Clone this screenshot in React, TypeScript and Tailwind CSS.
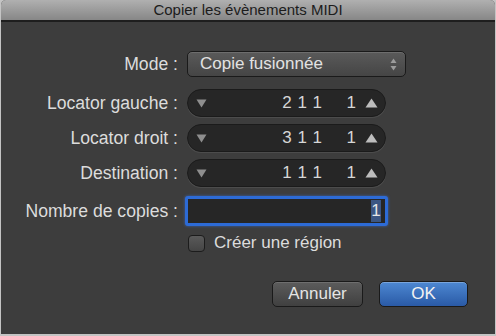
import React from "react";

const font = { fontFamily: '"Liberation Sans", Arial, sans-serif' };

function Label({ children }: { children: React.ReactNode }) {
  return (
    <div className="w-[178px] shrink-0 whitespace-nowrap pr-[1px] text-right text-[17.6px] text-[#dcdcdc]">{children}</div>
  );
}

function DownTri() {
  return (
    <svg width="11" height="9" viewBox="0 0 11 9">
      <path d="M0.5 0.5 L10.5 0.5 L5.5 8.5 Z" fill="#8e8e8e" />
    </svg>
  );
}

function UpTri() {
  return (
    <svg width="13" height="10" viewBox="0 0 13 10">
      <path d="M6.5 0.5 L12.5 9.5 L0.5 9.5 Z" fill="#bdbdbd" />
    </svg>
  );
}

function Locator({ label, main }: { label: string; main: string }) {
  return (
    <div className="flex h-[28px] items-center">
      <Label>{label}</Label>
      <div className="ml-[8px] flex h-[28px] w-[199px] items-center rounded-full border border-[#1b1b1b] bg-[#262626] pl-[8px] pr-[7px] shadow-[0_1px_0_rgba(255,255,255,0.08)]">
        <DownTri />
        <div className="flex flex-1 items-center justify-end text-[17px] text-[#d6d6d6]">
          <span className="whitespace-pre tracking-[0.5px]">{main}</span>
          <span className="ml-[24px]">1</span>
        </div>
        <div className="ml-[9px] flex items-center">
          <UpTri />
        </div>
      </div>
    </div>
  );
}

export default function App() {
  return (
    <div className="h-[336px] w-[496px] bg-[#c4c4c4] px-[1px] pb-[2px]" style={font}>
      <div className="flex h-full flex-col overflow-hidden rounded-t-[5px] bg-[#3d3d3d]">
        <div className="flex h-[20px] items-center justify-center bg-gradient-to-b from-[#b0b0b0] to-[#878787] text-[15px] text-[#1c1c1c]">
          Copier les évènements MIDI
        </div>
        <div className="h-[2px] bg-[#1e1e1e]" />

        <div className="flex flex-col pt-[29px]">
          <div className="flex h-[26px] items-center">
            <Label>Mode :</Label>
            <div className="ml-[8px] flex h-[26px] w-[219px] items-center rounded-[5px] border border-[#1a1a1a] bg-gradient-to-b from-[#5a5a5a] to-[#454545] pl-[12px] pr-[8px] text-[17px] text-[#e2e2e2] shadow-[inset_0_1px_0_rgba(255,255,255,0.12)]">
              <span className="flex-1">Copie fusionnée</span>
              <svg width="7" height="13" viewBox="0 0 7 13">
                <path d="M3.5 0.5 L6.5 5 L0.5 5 Z" fill="#9c9c9c" />
                <path d="M0.5 8 L6.5 8 L3.5 12.5 Z" fill="#9c9c9c" />
              </svg>
            </div>
          </div>

          <div className="mt-[12px]">
            <Locator label="Locator gauche :" main="2 1 1" />
          </div>
          <div className="mt-[7px]">
            <Locator label="Locator droit :" main="3 1 1" />
          </div>
          <div className="mt-[7px]">
            <Locator label="Destination :" main="1 1 1" />
          </div>

          <div className="mt-[9px] flex h-[30px] items-center">
            <Label>Nombre de copies :</Label>
            <div className="ml-[6px] flex h-[30px] w-[203px] items-stretch justify-end rounded-[3px] border-[3px] border-[#2d6bd6] bg-[#262626] py-[1px] pr-[4px] shadow-[0_0_3px_rgba(60,120,230,0.7)]">
              <span className="flex w-[10px] items-center justify-center bg-[#3b5683] text-[17px] text-[#e6e6e6]">1</span>
            </div>
          </div>

          <div className="mt-[8px] flex h-[18px] items-center pl-[187px]">
            <div className="h-[17px] w-[17px] rounded-[4px] border border-[#1c1c1c] bg-gradient-to-b from-[#5a5a5a] to-[#454545]" />
            <span className="ml-[9px] text-[17px] text-[#dcdcdc]">Créer une région</span>
          </div>

          <div className="mt-[29px] flex h-[26px] items-center justify-end pr-[27px]">
            <div className="flex h-[26px] w-[91px] items-center justify-center rounded-[5px] border border-[#1a1a1a] bg-gradient-to-b from-[#5c5c5c] to-[#404040] text-[17px] text-[#e4e4e4] shadow-[inset_0_1px_0_rgba(255,255,255,0.12)]">
              Annuler
            </div>
            <div className="ml-[16px] flex h-[26px] w-[89px] items-center justify-center rounded-[5px] border border-[#1a1a1a] bg-gradient-to-b from-[#4d88d2] to-[#2a5aa6] text-[17px] text-[#f2f2f2] shadow-[inset_0_1px_0_rgba(255,255,255,0.25)]">
              OK
            </div>
          </div>
        </div>
      </div>
    </div>
  );
}
